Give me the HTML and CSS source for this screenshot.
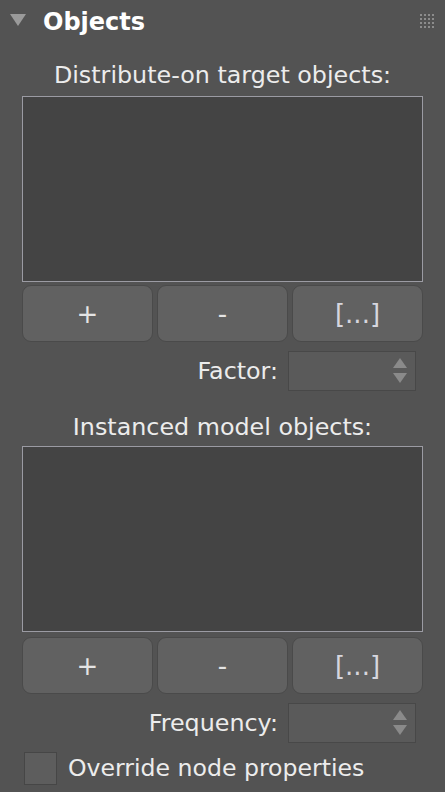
FILE: index.html
```html
<!DOCTYPE html>
<html>
<head>
<meta charset="utf-8">
<link rel="stylesheet" href="styles.css">
</head>
<body>
<div class="panel">
  <div class="header">
    <span class="tri"></span>
    <span class="title">Objects</span>
    <span class="grip">
      <i></i><i></i><i></i><i></i>
      <i></i><i></i><i></i><i></i>
      <i></i><i></i><i></i><i></i>
      <i></i><i></i><i></i><i></i>
    </span>
  </div>

  <div class="label first">Distribute-on target objects:</div>
  <div class="listbox"></div>
  <div class="btnrow">
    <div class="btn">+</div>
    <div class="btn">-</div>
    <div class="btn dots">[...]</div>
  </div>
  <div class="fieldrow">
    <span class="flabel">Factor:</span>
    <div class="spinner"><span class="up"></span><span class="down"></span></div>
  </div>

  <div class="label second">Instanced model objects:</div>
  <div class="listbox"></div>
  <div class="btnrow b2">
    <div class="btn">+</div>
    <div class="btn">-</div>
    <div class="btn dots">[...]</div>
  </div>
  <div class="fieldrow">
    <span class="flabel">Frequency:</span>
    <div class="spinner"><span class="up"></span><span class="down"></span></div>
  </div>

  <div class="checkrow">
    <span class="check"></span>
    <span class="clabel">Override node properties</span>
  </div>
</div>
</body>
</html>
```

FILE: styles.css
```css
html, body {
  margin: 0;
  padding: 0;
  background: #535353;
}
body {
  width: 445px;
  height: 792px;
  overflow: hidden;
  font-family: "DejaVu Sans", Verdana, sans-serif;
  color: #ececec;
}
.panel {
  display: flex;
  flex-direction: column;
}
.header {
  height: 55px;
  display: flex;
  align-items: flex-start;
  position: relative;
}
.tri {
  width: 0;
  height: 0;
  margin: 14px 0 0 10px;
  border-left: 8px solid transparent;
  border-right: 8px solid transparent;
  border-top: 12px solid #9a9a9a;
}
.title {
  margin-left: 17px;
  margin-top: 6px;
  font-weight: bold;
  font-size: 24px;
  line-height: 32px;
  color: #ffffff;
}
.grip {
  margin-left: auto;
  margin-right: 11px;
  margin-top: 14px;
  display: grid;
  grid-template-columns: repeat(4, 2px);
  grid-auto-rows: 2px;
  gap: 2px;
}
.grip i {
  display: block;
  background: #8c8c8c;
}
.label {
  text-align: center;
  font-size: 23.8px;
  line-height: 40px;
  height: 41px;
}
.label.second {
  margin-top: 15px;
  line-height: 42px;
  height: 40px;
}
.listbox {
  margin: 0 22px;
  height: 184px;
  background: #444444;
  border: 1px solid #9b9ba3;
}
.btnrow {
  margin: 3px 22px 0 22px;
  display: grid;
  grid-template-columns: 1fr 1fr 1fr;
  gap: 4px;
  height: 57px;
}
.btnrow.b2 {
  margin-top: 5px;
}
.btn {
  background: #616161;
  border: 1px solid #4a4a4a;
  border-radius: 9px;
  display: flex;
  align-items: center;
  justify-content: center;
  font-size: 26px;
  color: #e4e4e4;
}
.btn.dots {
  color: #d6d6de;
}
.fieldrow {
  margin-top: 9px;
  height: 40px;
  display: flex;
  justify-content: flex-end;
  align-items: center;
  padding-right: 29px;
}
.flabel {
  font-size: 23.8px;
  margin-right: 10px;
}
.spinner {
  width: 126px;
  height: 38px;
  background: #5a5a5a;
  border: 1px solid #484848;
  position: relative;
}
.spinner .up, .spinner .down {
  position: absolute;
  right: 8px;
  width: 0;
  height: 0;
  border-left: 7px solid transparent;
  border-right: 7px solid transparent;
}
.spinner .up {
  top: 6px;
  border-bottom: 10px solid #8a8a8a;
}
.spinner .down {
  top: 21px;
  border-top: 10px solid #8a8a8a;
}
.checkrow {
  margin-top: 9px;
  display: flex;
  align-items: center;
  height: 32px;
  padding-left: 24px;
}
.check {
  width: 31px;
  height: 31px;
  background: #5d5d5d;
  border: 1px solid #464646;
}
.clabel {
  margin-left: 11px;
  font-size: 23.6px;
}
```
